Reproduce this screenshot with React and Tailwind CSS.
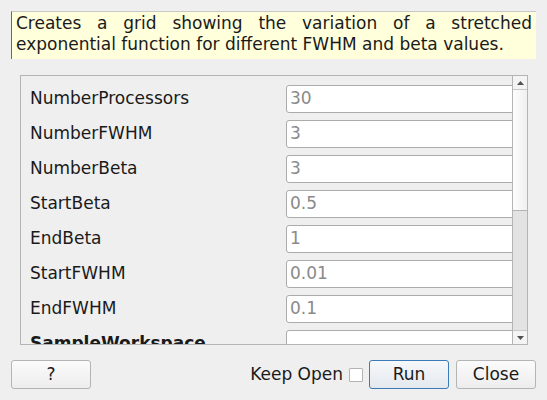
import React from 'react';

const rows = [
  { label: 'NumberProcessors', value: '30' },
  { label: 'NumberFWHM', value: '3' },
  { label: 'NumberBeta', value: '3' },
  { label: 'StartBeta', value: '0.5' },
  { label: 'EndBeta', value: '1' },
  { label: 'StartFWHM', value: '0.01' },
  { label: 'EndFWHM', value: '0.1' },
  { label: 'SampleWorkspace', value: '', bold: true },
];

const Button = ({ children, primary }) => (
  <button
    className={`w-[80px] h-[29px] rounded-[3px] border text-[17px] text-[#1a1a1a] ${
      primary
        ? 'border-[#3b7bb5] bg-gradient-to-b from-[#f6f8fa] to-[#e4e9ee]'
        : 'border-[#b4b4b4] bg-gradient-to-b from-[#fbfbfb] to-[#ededed]'
    }`}
  >
    {children}
  </button>
);

const App = () => {
  return (
    <div className="w-[547px] h-[400px] bg-[#efefef] overflow-hidden font-['DejaVu_Sans',sans-serif] text-[#1a1a1a]">
      {/* Description */}
      <div className="ml-[11px] pt-[11px]">
        <div className="w-[525px] h-[48px] bg-[#ffffdc] border-l border-l-[#6a6a6a] border-t border-t-[#c8c8c8] px-[4px] pt-[1px] text-[17px] leading-[21px] text-justify [text-align-last:left]">
          Creates a grid showing the variation of a stretched exponential function for different FWHM and beta values.
        </div>
      </div>

      {/* Property list */}
      <div className="ml-[20px] mt-[16px] w-[508px] h-[270px] border border-[#b4b4b4] flex">
        <div className="flex-1 overflow-hidden pt-[9px]">
          {rows.map((row) => (
            <div key={row.label} className="flex items-center h-[28px] mb-[7px]">
              <div className={`shrink-0 w-[265px] pl-[9px] text-[17px] whitespace-nowrap ${row.bold ? 'font-bold' : ''}`}>
                {row.label}
              </div>
              <div className="shrink-0 w-[240px] h-[28px] bg-white border border-[#ababab] rounded-[3px] pl-[3px] flex items-center text-[17px] text-[#8a8a8a]">
                {row.value}
              </div>
            </div>
          ))}
        </div>
        <div className="w-[15px] border-l border-[#b4b4b4] flex flex-col bg-[#e3e3e3]">
          <div className="h-[14px] bg-[#f4f4f4] border-b border-[#c8c8c8] flex items-center justify-center">
            <svg width="7" height="4" viewBox="0 0 7 4"><path d="M0 4 L3.5 0 L7 4 Z" fill="#505050" /></svg>
          </div>
          <div className="h-[121px] bg-gradient-to-r from-[#fdfdfd] to-[#f0f0f0] border-b border-[#b4b4b4]" />
          <div className="flex-1" />
          <div className="h-[14px] bg-[#f4f4f4] border-t border-[#c8c8c8] flex items-center justify-center">
            <svg width="7" height="4" viewBox="0 0 7 4"><path d="M0 0 L3.5 4 L7 0 Z" fill="#505050" /></svg>
          </div>
        </div>
      </div>

      {/* Bottom buttons */}
      <div className="mt-[15px] px-[11px] flex items-center">
        <Button>?</Button>
        <div className="flex-1" />
        <span className="text-[17px] mr-[6px]">Keep Open</span>
        <div className="w-[14px] h-[14px] bg-white border border-[#b4b4b4] rounded-[1px] mr-[6px]" />
        <Button primary>Run</Button>
        <div className="w-[7px]" />
        <Button>Close</Button>
      </div>
    </div>
  );
};

export default App;
